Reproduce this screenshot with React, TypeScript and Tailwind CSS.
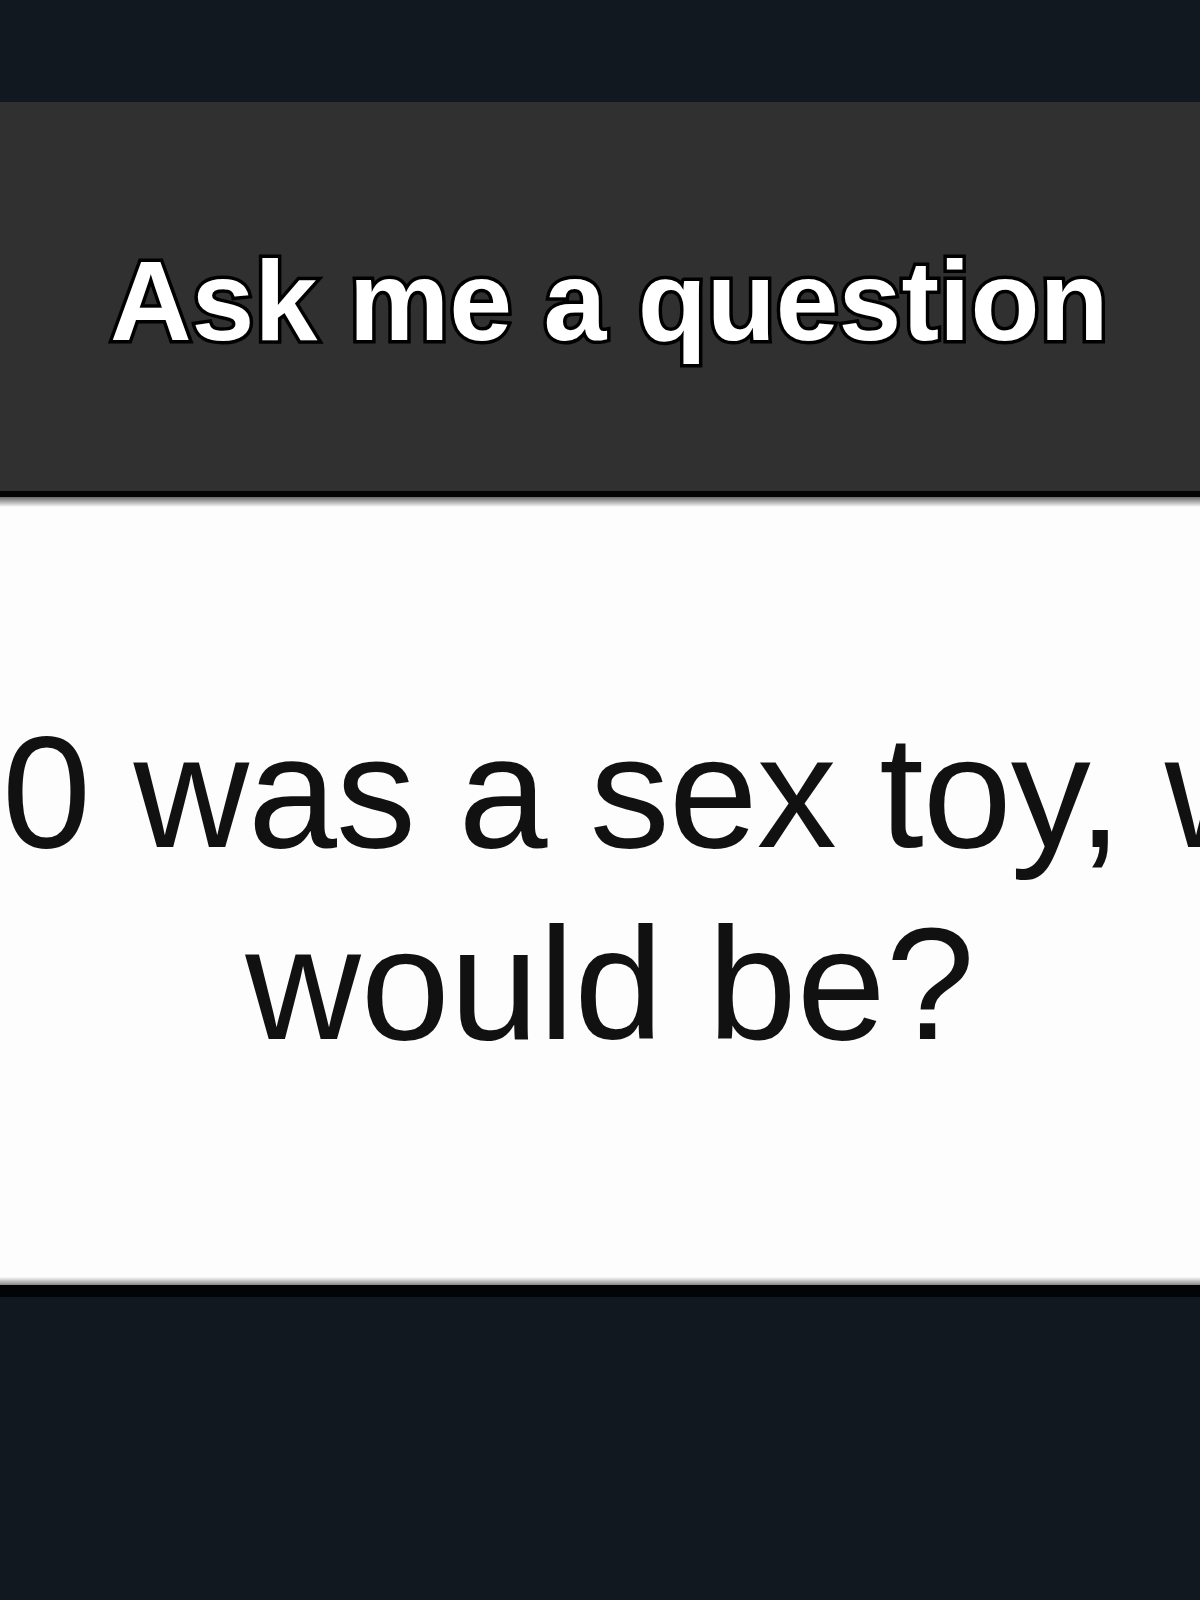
import React from "react";

const App = () => {
  return (
    <div className="min-h-screen w-full bg-[#111820] overflow-hidden">
      <div className="h-[102px] bg-[#111820]" />

      {/* title bar */}
      <div className="h-[389px] bg-[#303030] pt-[143px] pl-[110px]">
        <h1 className="font-['Liberation_Sans',Arial,sans-serif] font-bold text-[113px] leading-none text-white whitespace-nowrap [-webkit-text-stroke:7px_#000] [paint-order:stroke_fill] [text-shadow:0_1px_3px_rgba(0,0,0,0.6)]">
          Ask me a question
        </h1>
      </div>
      <div className="h-[6px] bg-[#040404]" />

      {/* question card */}
      <div className="h-[788px] bg-[#fdfdfd] flex flex-col overflow-hidden">
        <div className="h-[10px] bg-linear-to-b from-[#6a6a6a] to-[#fdfdfd]" />
        <div className="pt-[189px] font-['Liberation_Sans',Arial,sans-serif] text-[160px] leading-[192px] text-[#111]">
          <div className="whitespace-nowrap ml-[2px] tracking-[-1px]">0 was a sex toy, w</div>
          <div className="whitespace-nowrap text-center pl-[20px]">would be?</div>
        </div>
        <div className="flex-1" />
        <div className="h-[8px] bg-linear-to-b from-[#fdfdfd] to-[#8a8a8a]" />
      </div>
      <div className="h-[12px] bg-[#030405]" />
    </div>
  );
};

export default App;
